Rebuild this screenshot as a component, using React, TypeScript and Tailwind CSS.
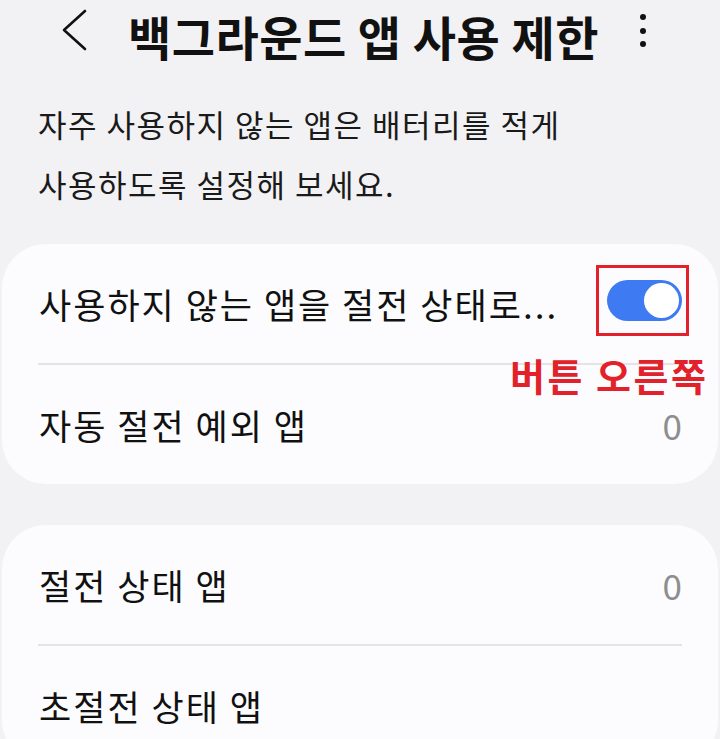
const font = { fontFamily: '"Noto Sans CJK KR", "Noto Sans", sans-serif' };

function Toggle() {
    return (
        <div className="relative mb-[7px]">
            <div className="flex h-[41px] w-[75px] items-center justify-end rounded-full bg-[#3e7bf3] pr-[3px]">
                <div className="h-[35px] w-[35px] rounded-full bg-white" />
            </div>
            {/* annotation box */}
            <div className="absolute -left-[11px] -top-[15px] h-[71px] w-[93px] border-[3px] border-[#e3212b]" />
            <div className="absolute -left-[97px] top-[76px] whitespace-nowrap text-[38px] font-bold leading-none tracking-[2.5px] text-[#e3212b]">
                버튼 오른쪽
            </div>
        </div>
    );
}

function Row({ label, value, children }: { label: string; value?: string; children?: React.ReactNode }) {
    return (
        <div className="flex h-[119px] items-center justify-between pl-[37px] pr-[36px]">
            <span className="text-[35px] leading-none tracking-[2px] text-[#111]">{label}</span>
            {value !== undefined && <span className="text-[35px] leading-none text-[#8e8e8e]">{value}</span>}
            {children}
        </div>
    );
}

export default function App() {
    return (
        <div className="h-[739px] w-[720px] overflow-hidden bg-[#f2f2f4]" style={font}>
            {/* Header */}
            <div className="flex h-[70px] items-center">
                <svg className="mb-[10px] ml-[61px] h-[42px] w-[26px]" viewBox="0 0 26 42" fill="none">
                    <polyline points="24,2 3,21 24,40" stroke="#111" strokeWidth="2.6" strokeLinecap="round" strokeLinejoin="round" />
                </svg>
                <h1 className="ml-[41px] text-[47px] font-bold leading-none tracking-[0.5px] text-[#111]">
                    백그라운드 앱 사용 제한
                </h1>
                <div className="mb-[9px] ml-auto mr-[74px] flex flex-col items-center gap-[7.5px]">
                    <div className="h-[6px] w-[6px] rounded-full bg-[#111]" />
                    <div className="h-[6px] w-[6px] rounded-full bg-[#111]" />
                    <div className="h-[6px] w-[6px] rounded-full bg-[#111]" />
                </div>
            </div>

            {/* Description */}
            <div className="mt-[24px] pl-[38px] text-[31px] leading-[60px] tracking-[1.5px] text-[#1a1a1a]">
                <p>자주 사용하지 않는 앱은 배터리를 적게</p>
                <p>사용하도록 설정해 보세요.</p>
            </div>

            {/* Card 1 */}
            <div className="mx-[2px] mt-[30px] rounded-[44px] bg-[#fcfcfe]">
                <Row label="사용하지 않는 앱을 절전 상태로...">
                    <Toggle />
                </Row>
                <div className="mx-[36px] h-[2px] bg-[#e4e4e6]" />
                <Row label="자동 절전 예외 앱" value="0" />
            </div>

            {/* Card 2 */}
            <div className="mx-[2px] mt-[41px] rounded-[44px] bg-[#fcfcfe]">
                <Row label="절전 상태 앱" value="0" />
                <div className="mx-[36px] h-[2px] bg-[#e4e4e6]" />
                <Row label="초절전 상태 앱" />
            </div>
        </div>
    );
}
